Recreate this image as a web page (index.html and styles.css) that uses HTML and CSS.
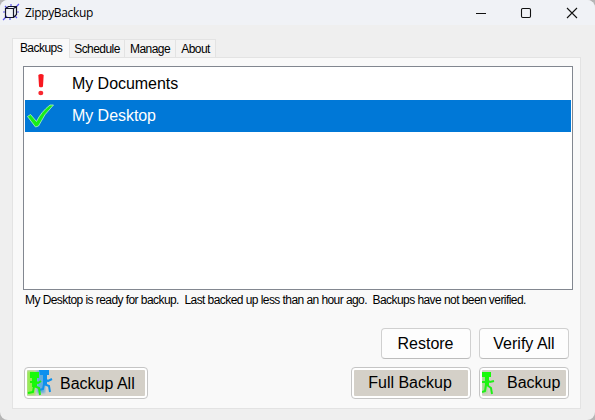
FILE: index.html
```html
<!DOCTYPE html>
<html lang="en">
<head>
<meta charset="utf-8">
<title>ZippyBackup</title>
<link rel="stylesheet" href="styles.css">
</head>
<body>
<div class="window">
  <header class="titlebar">
    <svg class="app-icon" width="18" height="18" viewBox="0 0 18 18" fill="none">
      <path d="M1 17L5 13M13 5L17 1M9 1V4M8 14V17M1 9H4M14 9H17M3 3L5 5M13 13L15 15" stroke="#5a55f0" stroke-width="1.2"/>
      <path d="M3.500 5.500H11.500V14.500H3.500ZM3.500 5.500L6.500 3.500H14.500V11.500L11.500 14.500M11.500 5.500L14.500 3.500" stroke="#15152a" stroke-width="1.200"/>
    </svg>
    <h1 class="title">ZippyBackup</h1>
    <svg class="controls" width="104" height="12" viewBox="0 0 104 12" fill="none" stroke="#111">
      <path d="M0 6.500H10" />
      <rect x="45.500" y="1.500" width="9" height="9" rx="1.200" stroke-width="1.100"/>
      <path d="M91 1L101 11M101 1L91 11" stroke-width="1.100"/>
    </svg>
  </header>
  <main class="content">
    <nav class="tabs">
      <div class="tab active"><span>Backups</span></div>
      <div class="tab schedule"><span>Schedule</span></div>
      <div class="tab manage"><span>Manage</span></div>
      <div class="tab about"><span>About</span></div>
    </nav>
    <section class="page">
      <div class="list">
        <div class="row">
          <svg class="row-icon" width="32" height="32" viewBox="0 0 32 32">
            <path d="M13.300 7Q16 4.800 18.700 7L18 18.500Q16 20.200 14 18.500Z" fill="#f81820"/>
            <ellipse cx="15.800" cy="25" rx="2.500" ry="2.200" fill="#f82830"/>
          </svg>
          <span class="name">My Documents</span>
        </div>
        <div class="row selected">
          <svg class="row-icon" width="32" height="32" viewBox="0 0 32 32">
            <path d="M2.500 16.500L5.500 14.500L11.500 21.500Q16 12 25 5H28.500Q19 14 13.500 26L10.500 27Z" fill="#18ee18" stroke="#b4f5c0" stroke-width=".8"/>
          </svg>
          <span class="name">My Desktop</span>
        </div>
      </div>
      <p class="status">My Desktop is ready for backup.&nbsp; Last backed up less than an hour ago.&nbsp; Backups have not been verified.</p>
      <div class="actions top">
        <button class="btn"><span class="restore-text">Restore</span></button>
        <button class="btn"><span>Verify All</span></button>
      </div>
      <div class="actions bottom">
        <button class="btn gray all">
          <svg class="runners" width="26" height="26" viewBox="0 0 26 26">
            <defs>
              <filter id="soft"><feGaussianBlur stdDeviation="1.2"/></filter>
            </defs>
            <path d="M9 1H18V23H10Z" fill="#4fa6e0" opacity=".85" filter="url(#soft)"/>
            <path d="M12 0H22V5H13ZM16 5H20V14H16Z" fill="#0e90ed"/>
            <path d="M18 9L21 11L25 9M17 14L22 16L23 22M17 14L16 19L12 20" fill="none" stroke="#0e90ed" stroke-width="2"/>
            <path d="M0 1H8V25H0Z" fill="#8df044" opacity=".9" filter="url(#soft)"/>
            <path d="M3 2H12V8H3ZM5 7H10V17H5Z" fill="#18fa0a"/>
            <path d="M3 12H9M8 11L11 13L14 11M7 16L12 18L13 25M7 16L6 22L1 23" fill="none" stroke="#18f50a" stroke-width="2"/>
          </svg>
          <span class="all-text">Backup All</span>
        </button>
        <button class="btn gray full"><span class="full-text">Full Backup</span></button>
        <button class="btn gray single">
          <svg class="runner" width="13" height="26" viewBox="0 0 13 26">
            <path d="M0 3H5V23H0Z" fill="#83e56b" opacity=".65" filter="url(#soft)"/>
            <path d="M0 2H9V7H0ZM3 7H7V16H3Z" fill="#18fa0a"/>
            <path d="M0 12H6M5 10L8 12L12 11M5 15L9 18L10 24M4 15L3 21L0 22" fill="none" stroke="#20ef18" stroke-width="2"/>
          </svg>
          <span class="single-text">Backup</span>
        </button>
      </div>
    </section>
  </main>
</div>
</body>
</html>
```
FILE: styles.css
```css
* { box-sizing: border-box; }
body {
  margin: 0;
  width: 595px;
  height: 420px;
  overflow: hidden;
  background: #b5b5b5;
  color: #000;
  font-family: "Liberation Sans", Arial, sans-serif;
}
.window {
  height: 420px;
  border-radius: 8px;
  overflow: hidden;
  background: #efefef;
}
.titlebar {
  display: flex;
  align-items: center;
  height: 25px;
  padding: 0 15px 0 2px;
  background: #f0f2f6;
}
.app-icon { margin-bottom: 1px; }
.title {
  margin: 0 0 0 5px;
  font: 400 12px/16px "Open Sans", "Noto Sans", sans-serif;
  letter-spacing: -0.35px;
}
.controls { margin-left: auto; }
.content { padding: 13px 14px 0 12px; }
.tabs {
  display: flex;
  align-items: flex-end;
  height: 19px;
}
.tab {
  height: 18px;
  padding-top: 2px;
  border: 1px solid #e3e3e3;
  border-left: 0;
  border-bottom: 0;
  background: #f3f3f3;
  font-size: 12px;
  line-height: 14px;
  text-align: center;
  white-space: nowrap;
  letter-spacing: -0.55px;
}
.tab.active {
  position: relative;
  width: 58px;
  height: 20px;
  margin-bottom: -1px;
  border-left: 1px solid #e3e3e3;
  background: #f9f9f9;
}
.schedule { width: 55px; }
.manage { width: 51px; }
.about { width: 40px; }
.page {
  height: 352px;
  padding: 8px 10px 0;
  border: 1px solid #e3e3e3;
  background: #f9f9f9;
}
.list {
  width: 550px;
  height: 224px;
  padding: 1px;
  border: 1px solid #828790;
  background: #fff;
}
.row {
  display: flex;
  align-items: center;
  height: 32px;
}
.selected { background: #0078d7; color: #fff; }
.name {
  margin-left: 15px;
  font-size: 16px;
  line-height: 20px;
  letter-spacing: -0.05px;
}
.status {
  margin: 3px 0 0 2px;
  font-size: 12px;
  line-height: 14px;
  white-space: nowrap;
  letter-spacing: -0.565px;
}
.actions { display: flex; gap: 8px; }
.top { margin: 21px 1px 0 0; justify-content: flex-end; }
.bottom { margin: 8px 1px 0 1px; }
.btn {
  display: flex;
  align-items: center;
  justify-content: center;
  width: 90px;
  height: 31px;
  padding: 0;
  border: 1px solid #d0d0d0;
  border-bottom-color: #bcbcbc;
  border-radius: 4px;
  background: #fdfdfd;
  color: #000;
  font: 16px/20px "Liberation Sans", Arial, sans-serif;
  white-space: nowrap;
}
.gray {
  height: 32px;
  padding: 2px;
  border-color: #c5c5c5;
  background-image: linear-gradient(#d4d0c8, #d4d0c8), linear-gradient(#fff, #fff);
  background-clip: content-box, padding-box;
}
.all { width: 124px; justify-content: flex-start; }
.full { width: 120px; margin-left: auto; }
.single { justify-content: flex-start; }
.all-text { margin: 2px 0 0 7px; }
.restore-text { margin-right: 1px; }
.full-text { margin-right: 2px; }
.single-text { margin-left: 12px; }
```
